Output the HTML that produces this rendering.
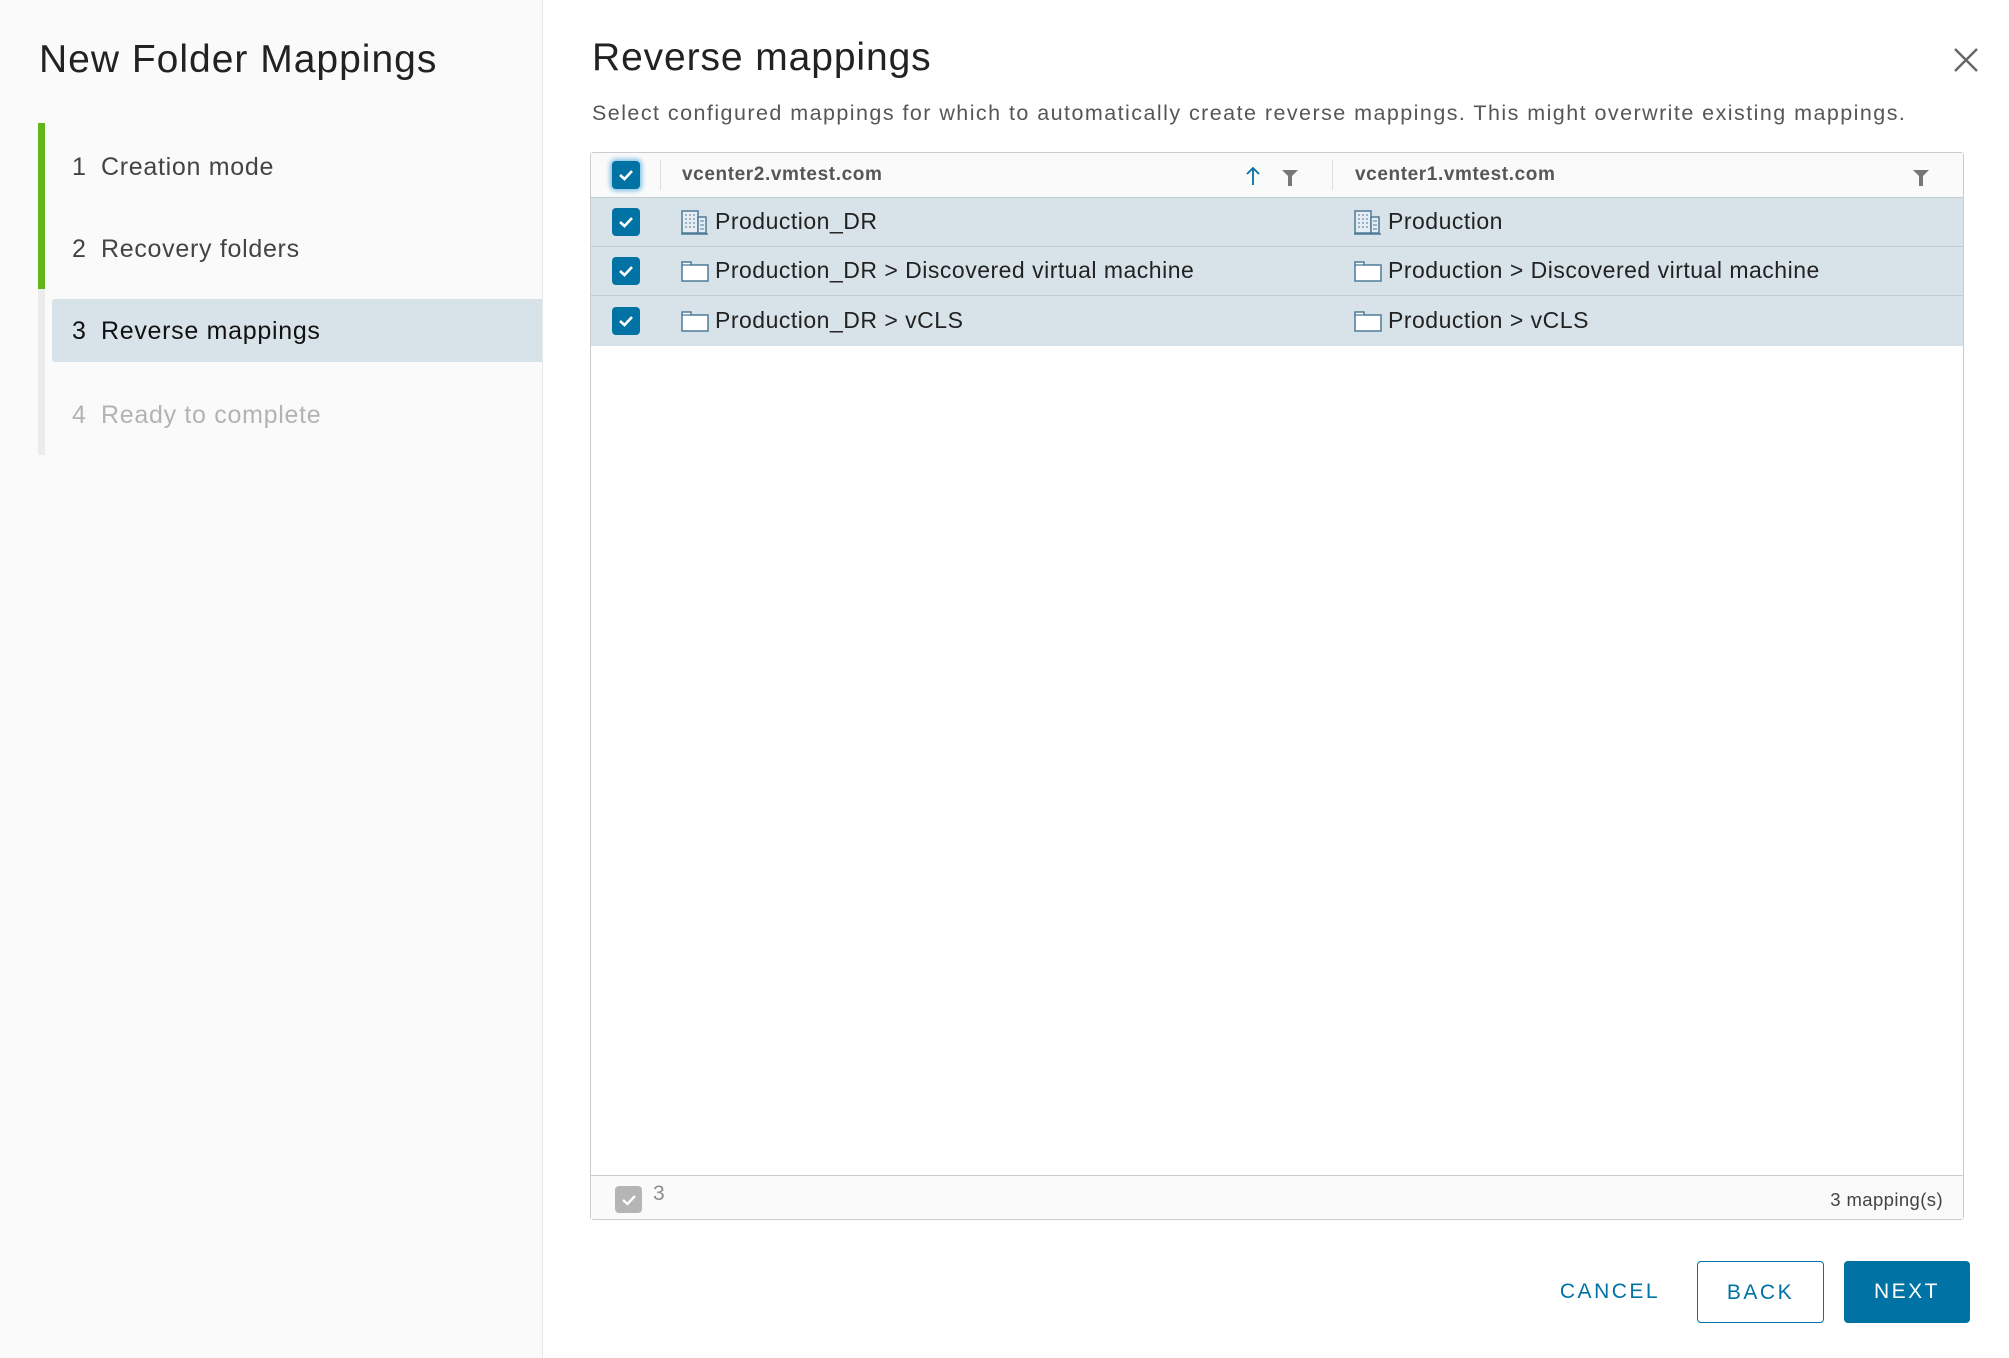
<!DOCTYPE html>
<html><head><meta charset="utf-8">
<style>
*{box-sizing:border-box;margin:0;padding:0}
body{width:2009px;height:1358px;position:relative;background:#fff;font-family:"Liberation Sans",sans-serif;color:#313131;overflow:hidden}
.side{position:absolute;left:0;top:0;width:543px;height:1358px;background:#fafafa;border-right:1px solid #e8e8e8}
.t1{position:absolute;left:39px;top:38px;font-size:39px;letter-spacing:1px;color:#222;white-space:nowrap}
.bar{position:absolute;left:38px;width:7px}
.step{position:absolute;left:72px;font-size:25px;letter-spacing:0.7px;white-space:nowrap;line-height:30px}
.step b{font-weight:normal;display:inline-block;width:29px}
.hl{position:absolute;left:52px;top:299px;width:490px;height:63px;background:#d8e3e9;border-radius:3px 0 0 3px}
.abs{position:absolute;white-space:nowrap}
.cb{position:absolute;width:28px;height:28px;border-radius:4px;background:#0072a3}
.cb svg{position:absolute;left:6px;top:7px}
.row{position:absolute;left:591px;width:1372px;height:49px;background:#d8e3e9;border-top:1px solid #c2ccd3}
.cell{position:absolute;font-size:23px;letter-spacing:0.5px;color:#222;line-height:49px;top:0}
.btn{position:absolute;top:1261px;height:62px;font-size:21px;letter-spacing:2.5px;line-height:62px;text-align:center;border-radius:4px}
</style></head><body>
<div class="side">
 <div class="t1">New Folder Mappings</div>
 <div class="bar" style="top:123px;height:166px;background:#62b61c"></div>
 <div class="bar" style="top:289px;height:166px;background:#ececec"></div>
 <div class="hl"></div>
 <div class="step" style="top:152px;color:#444"><b>1</b>Creation mode</div>
 <div class="step" style="top:234px;color:#444"><b>2</b>Recovery folders</div>
 <div class="step" style="top:316px;color:#111"><b>3</b>Reverse mappings</div>
 <div class="step" style="top:400px;color:#b3b3b3"><b>4</b>Ready to complete</div>
</div>

<div class="abs" style="left:592px;top:36px;font-size:39px;letter-spacing:0.9px;color:#222">Reverse mappings</div>
<svg class="abs" style="left:1954px;top:48px" width="24" height="24"><path d="M1 1L23 23M23 1L1 23" stroke="#666" stroke-width="2.4"/></svg>
<div class="abs" style="left:592px;top:101px;font-size:21.5px;color:#565656;letter-spacing:1.45px">Select configured mappings for which to automatically create reverse mappings. This might overwrite existing mappings.</div>

<div class="abs" style="left:590px;top:152px;width:1374px;height:1068px;border:1px solid #ccc;border-radius:3px;background:#fff"></div>
<div class="abs" style="left:591px;top:153px;width:1372px;height:45px;background:#fafafa"></div>
<div class="cb" style="left:612px;top:161px;box-shadow:0 0 5px 2px #7ec1e6"><svg width="16" height="14"><path d="M2 7L6.5 11L14 3" stroke="#fff" stroke-width="2.6" fill="none"/></svg></div>
<div class="abs" style="left:660px;top:160px;width:1px;height:30px;background:#ddd"></div>
<div class="abs" style="left:682px;top:164px;font-size:19px;letter-spacing:0.6px;font-weight:bold;color:#565656">vcenter2.vmtest.com</div>
<svg class="abs" style="left:1246px;top:166px" width="14" height="20"><path d="M7 19V2M1 8L7 2L13 8" stroke="#0072a3" stroke-width="1.8" fill="none"/></svg>
<svg class="abs" style="left:1282px;top:170px" width="16" height="16"><path d="M0 0H16L10 6V16H6V6Z" fill="#777"/></svg>
<div class="abs" style="left:1332px;top:160px;width:1px;height:30px;background:#ddd"></div>
<div class="abs" style="left:1355px;top:164px;font-size:19px;letter-spacing:0.6px;font-weight:bold;color:#565656">vcenter1.vmtest.com</div>
<svg class="abs" style="left:1913px;top:170px" width="16" height="16"><path d="M0 0H16L10 6V16H6V6Z" fill="#777"/></svg>

<div class="row" style="top:197px"></div>
<div class="row" style="top:246px"></div>
<div class="row" style="top:295px;height:51px"></div>

<div class="abs" style="left:0;top:197px;width:2009px;height:49px">
 <div class="cb" style="left:612px;top:11px"><svg width="16" height="14"><path d="M2 7L6.5 11L14 3" stroke="#fff" stroke-width="2.6" fill="none"/></svg></div>
 <svg class="abs" style="left:681px;top:12px" width="27" height="26"><rect x="1" y="2" width="16" height="22" fill="#e5edf3" stroke="#4f7b99" stroke-width="1.5"/><rect x="17" y="8" width="8" height="16" fill="#e5edf3" stroke="#4f7b99" stroke-width="1.5"/><path d="M4 6h2M8 6h2M12 6h2M4 10h2M8 10h2M12 10h2M4 14h2M8 14h2M12 14h2M4 18h2M8 18h2M12 18h2M19 12h4M19 16h4M19 20h4" stroke="#6e93ad" stroke-width="1.3"/><path d="M0 25H27" stroke="#4f7b99" stroke-width="1.5"/></svg>
 <div class="cell" style="left:715px">Production_DR</div>
 <svg class="abs" style="left:1354px;top:12px" width="27" height="26"><rect x="1" y="2" width="16" height="22" fill="#e5edf3" stroke="#4f7b99" stroke-width="1.5"/><rect x="17" y="8" width="8" height="16" fill="#e5edf3" stroke="#4f7b99" stroke-width="1.5"/><path d="M4 6h2M8 6h2M12 6h2M4 10h2M8 10h2M12 10h2M4 14h2M8 14h2M12 14h2M4 18h2M8 18h2M12 18h2M19 12h4M19 16h4M19 20h4" stroke="#6e93ad" stroke-width="1.3"/><path d="M0 25H27" stroke="#4f7b99" stroke-width="1.5"/></svg>
 <div class="cell" style="left:1388px">Production</div>
</div>
<div class="abs" style="left:0;top:246px;width:2009px;height:49px">
 <div class="cb" style="left:612px;top:11px"><svg width="16" height="14"><path d="M2 7L6.5 11L14 3" stroke="#fff" stroke-width="2.6" fill="none"/></svg></div>
 <svg class="abs" style="left:681px;top:13px" width="28" height="23"><path d="M1 3H10V6H27V22H1Z" fill="#fff" stroke="#4f7b99" stroke-width="1.5"/><path d="M1 6H10" stroke="#4f7b99" stroke-width="1.3"/></svg>
 <div class="cell" style="left:715px">Production_DR &gt; Discovered virtual machine</div>
 <svg class="abs" style="left:1354px;top:13px" width="28" height="23"><path d="M1 3H10V6H27V22H1Z" fill="#fff" stroke="#4f7b99" stroke-width="1.5"/><path d="M1 6H10" stroke="#4f7b99" stroke-width="1.3"/></svg>
 <div class="cell" style="left:1388px">Production &gt; Discovered virtual machine</div>
</div>
<div class="abs" style="left:0;top:295px;width:2009px;height:49px">
 <div class="cb" style="left:612px;top:12px"><svg width="16" height="14"><path d="M2 7L6.5 11L14 3" stroke="#fff" stroke-width="2.6" fill="none"/></svg></div>
 <svg class="abs" style="left:681px;top:14px" width="28" height="23"><path d="M1 3H10V6H27V22H1Z" fill="#fff" stroke="#4f7b99" stroke-width="1.5"/><path d="M1 6H10" stroke="#4f7b99" stroke-width="1.3"/></svg>
 <div class="cell" style="left:715px;top:1px">Production_DR &gt; vCLS</div>
 <svg class="abs" style="left:1354px;top:14px" width="28" height="23"><path d="M1 3H10V6H27V22H1Z" fill="#fff" stroke="#4f7b99" stroke-width="1.5"/><path d="M1 6H10" stroke="#4f7b99" stroke-width="1.3"/></svg>
 <div class="cell" style="left:1388px;top:1px">Production &gt; vCLS</div>
</div>

<div class="abs" style="left:591px;top:1175px;width:1372px;height:44px;background:#fafafa;border-top:1px solid #ccc"></div>
<div class="cb" style="left:615px;top:1186px;width:27px;height:27px;background:#b5b5b5"><svg width="16" height="14"><path d="M2 7L6.5 11L14 3" stroke="#fff" stroke-width="2.4" fill="none"/></svg></div>
<div class="abs" style="left:653px;top:1182px;font-size:21px;color:#8c8c8c">3</div>
<div class="abs" style="right:66px;top:1189px;font-size:18.5px;letter-spacing:0.4px;color:#444">3 mapping(s)</div>

<div class="btn" style="left:1550px;width:120px;color:#0072a3">CANCEL</div>
<div class="btn" style="left:1697px;width:127px;border:1.5px solid #0072a3;color:#0072a3">BACK</div>
<div class="btn" style="left:1844px;width:126px;background:#0072a3;color:#fff">NEXT</div>
</body></html>
